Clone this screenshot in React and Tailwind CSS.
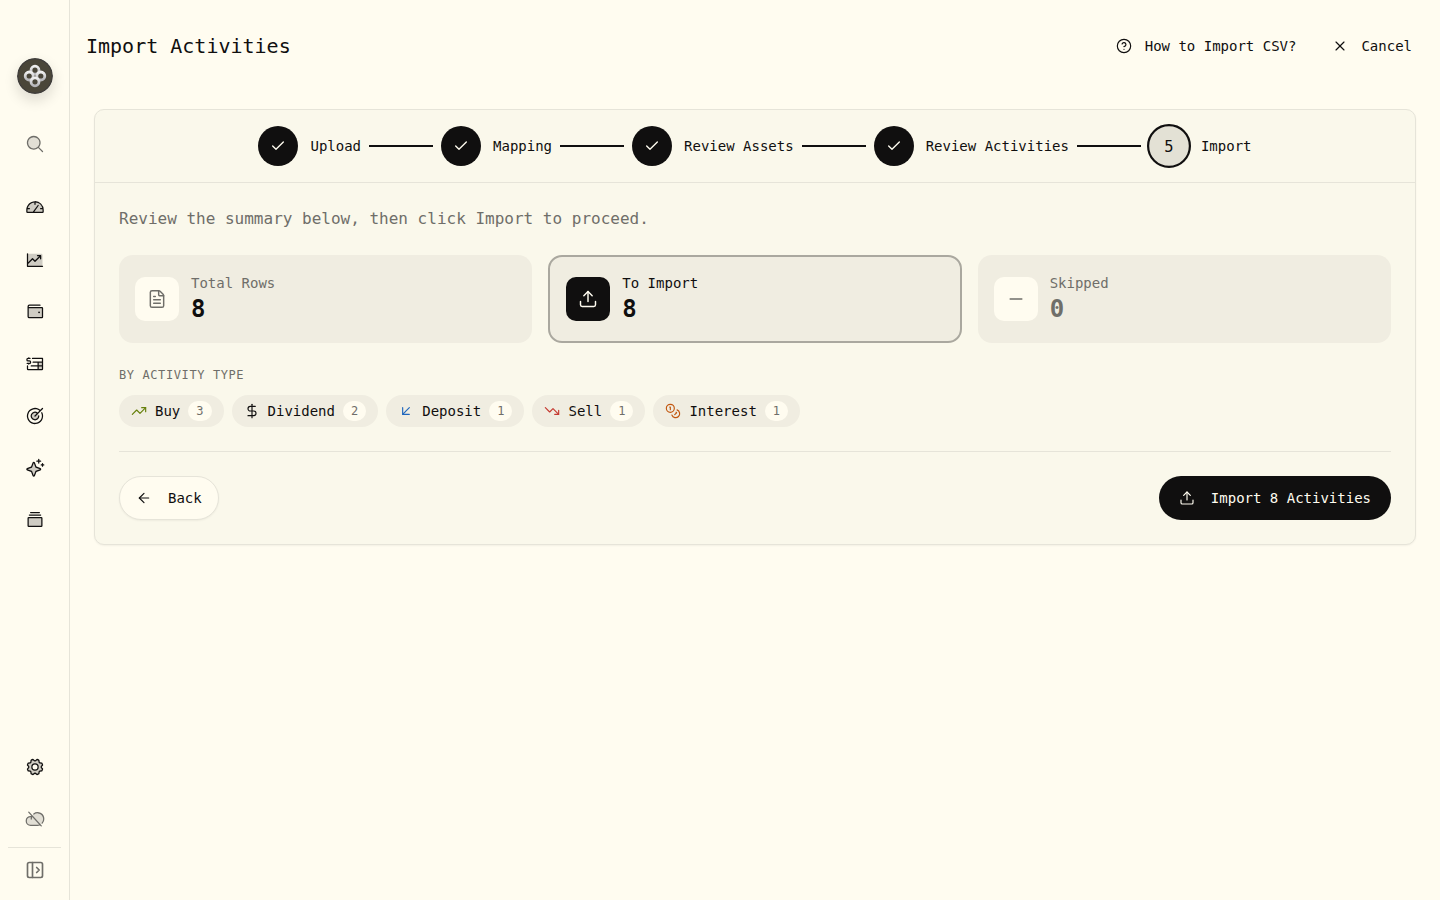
import React from 'react';
import {
  ArrowDownLeft,
  ArrowLeft,
  Check,
  CircleQuestionMark,
  Coins,
  DollarSign,
  FileText,
  Minus,
  PanelLeftOpen,
  TrendingDown,
  TrendingUp,
  Upload,
  X,
} from 'lucide-react';
import {
  PiCardsThreeDuotone,
  PiChartLineUpDuotone,
  PiCloudSlashDuotone,
  PiGaugeDuotone,
  PiGearDuotone,
  PiInvoiceDuotone,
  PiMagnifyingGlassDuotone,
  PiSparkleDuotone,
  PiTargetDuotone,
  PiWalletDuotone,
} from 'react-icons/pi';

const navItems = [
  { label: 'Dashboard', icon: PiGaugeDuotone },
  { label: 'Insights', icon: PiChartLineUpDuotone },
  { label: 'Holdings', icon: PiWalletDuotone },
  { label: 'Activities', icon: PiInvoiceDuotone },
  { label: 'Goals', icon: PiTargetDuotone },
  { label: 'Assistant', icon: PiSparkleDuotone },
  { label: 'Addons', icon: PiCardsThreeDuotone },
];

const steps = ['Upload', 'Mapping', 'Review Assets', 'Review Activities', 'Import'];
const currentStep = 4;

const activityTypes = [
  { label: 'Buy', count: 3, icon: TrendingUp, color: 'text-[#66800b]' },
  { label: 'Dividend', count: 2, icon: DollarSign, color: 'text-[#100f0f]' },
  { label: 'Deposit', count: 1, icon: ArrowDownLeft, color: 'text-[#1f66bd]' },
  { label: 'Sell', count: 1, icon: TrendingDown, color: 'text-[#c53a31]' },
  { label: 'Interest', count: 1, icon: Coins, color: 'text-[#c2570f]' },
];

function Logo() {
  return (
    <svg viewBox="0 0 36 36" className="size-9 rounded-full shadow-[0_6px_14px_rgba(16,15,15,0.14)]" aria-hidden="true">
      <defs>
        <linearGradient id="petals" x1="0" y1="0" x2="0" y2="1">
          <stop offset="0" stopColor="#f0f0f0" />
          <stop offset="1" stopColor="#b4b4b8" />
        </linearGradient>
      </defs>
      <circle cx="18" cy="18" r="18" fill="#403e3c" />
      <circle cx="18" cy="18" r="16.5" fill="#4a4639" />
      <g fill="none" stroke="url(#petals)" strokeWidth="2.8">
        <circle cx="18" cy="12.2" r="4" />
        <circle cx="12.2" cy="18" r="4" />
        <circle cx="23.8" cy="18" r="4" />
        <circle cx="18" cy="23.8" r="4" />
      </g>
    </svg>
  );
}

function NavLink({ label, icon: Icon, muted }) {
  return (
    <a
      href="#"
      aria-label={label}
      className={`flex size-10 items-center justify-center ${muted ? 'text-[#6f6e69]' : 'text-[#100f0f]'}`}
    >
      <Icon className="size-5" />
    </a>
  );
}

function Sidebar() {
  return (
    <aside className="flex w-[70px] shrink-0 flex-col border-r border-[#e6e4d9]">
      <div className="flex flex-col items-center pt-[58px]">
        <a href="#" aria-label="Home">
          <Logo />
        </a>
      </div>
      <nav className="flex flex-1 flex-col items-center pt-[30px]">
        <button type="button" aria-label="Search" className="flex size-10 items-center justify-center text-[#6f6e69]">
          <PiMagnifyingGlassDuotone className="size-5" />
        </button>
        <div className="flex flex-col gap-3 pt-6">
          {navItems.map((item) => (
            <NavLink key={item.label} {...item} />
          ))}
        </div>
      </nav>
      <div className="flex flex-col items-center gap-3 pb-2">
        <NavLink label="Settings" icon={PiGearDuotone} />
        <NavLink label="Sync disabled" icon={PiCloudSlashDuotone} muted />
      </div>
      <div className="mx-2 flex justify-center border-t border-[#e6e4d9] pt-0.5 pb-2.5">
        <button type="button" aria-label="Expand sidebar" className="flex size-10 items-center justify-center text-[#6f6e69]">
          <PanelLeftOpen className="size-5" />
        </button>
      </div>
    </aside>
  );
}

function Stepper() {
  return (
    <ol className="flex items-center justify-center border-b border-[#e6e4d9] px-6 py-4">
      {steps.map((step, i) => (
        <li key={step} className="flex items-center">
          {i < currentStep ? (
            <span className="flex size-10 items-center justify-center rounded-full bg-[#100f0f] text-[#fffcf0]">
              <Check className="size-4" />
            </span>
          ) : (
            <span className="flex size-10 scale-110 items-center justify-center rounded-full border-2 border-[#100f0f] bg-[#e3e1d5] text-sm font-medium">
              {i + 1}
            </span>
          )}
          <span className="ml-3 text-sm font-medium">{step}</span>
          {i < steps.length - 1 && <span className="mx-2 h-0.5 w-16 bg-[#100f0f]"></span>}
        </li>
      ))}
    </ol>
  );
}

function StatCard({ label, value, icon: Icon, variant = 'default' }) {
  const active = variant === 'active';
  const empty = variant === 'empty';

  return (
    <div className={`flex items-center gap-3 rounded-[14px] bg-[#f0ede1] p-4 ${active ? 'border-2 border-[#aaa89f]' : ''}`}>
      <div
        className={`flex size-11 items-center justify-center rounded-[10px] ${
          active ? 'bg-[#100f0f] text-[#fffcf0]' : 'bg-[#fffcf0] text-[#6f6e69]'
        }`}
      >
        <Icon className="size-5" strokeWidth={1.75} />
      </div>
      <div>
        <p className={`text-sm ${active ? '' : 'text-[#6f6e69]'}`}>{label}</p>
        <p className={`text-2xl font-bold ${empty ? 'text-[#6f6e69]' : ''}`}>{value}</p>
      </div>
    </div>
  );
}

function ActivityChip({ label, count, icon: Icon, color }) {
  return (
    <li className="flex h-8 items-center gap-2 rounded-full bg-[#f0ede1] px-3">
      <Icon className={`size-4 ${color}`} strokeWidth={1.75} />
      <span className="text-sm">{label}</span>
      <span className="flex h-5 items-center rounded-full bg-[#fffcf0] px-2 text-xs text-[#6f6e69]">{count}</span>
    </li>
  );
}

export default function App() {
  return (
    <div className="flex min-h-screen bg-[#fffcf0] font-['DejaVu_Sans_Mono',monospace] text-[#100f0f]">
      <Sidebar />

      <main className="flex-1">
        <header className="flex h-23 items-center justify-between pr-7 pl-4">
          <h1 className="text-xl font-medium">Import Activities</h1>
          <div className="flex items-center gap-9 text-sm">
            <button type="button" className="flex items-center gap-[13px]">
              <CircleQuestionMark className="size-4" strokeWidth={1.75} />
              How to Import CSV?
            </button>
            <button type="button" className="flex items-center gap-[13px] font-medium">
              <X className="size-4" strokeWidth={1.75} />
              Cancel
            </button>
          </div>
        </header>

        <div className="px-6 pt-[17px]">
          <section className="rounded-[10px] border border-[#e6e4d9] bg-[#faf8eb] shadow-xs">
            <Stepper />

            <div className="p-6">
              <p className="text-base text-[#6f6e69]">Review the summary below, then click Import to proceed.</p>

              {/* Summary */}
              <div className="mt-6 grid grid-cols-3 gap-4">
                <StatCard label="Total Rows" value={8} icon={FileText} />
                <StatCard label="To Import" value={8} icon={Upload} variant="active" />
                <StatCard label="Skipped" value={0} icon={Minus} variant="empty" />
              </div>

              <h2 className="mt-6 text-xs tracking-wider text-[#6f6e69] uppercase">By Activity Type</h2>
              <ul className="mt-3 flex flex-wrap gap-2">
                {activityTypes.map((type) => (
                  <ActivityChip key={type.label} {...type} />
                ))}
              </ul>

              {/* Footer actions */}
              <div className="mt-6 flex justify-between border-t border-[#e6e4d9] pt-6">
                <button
                  type="button"
                  className="flex h-11 items-center gap-4 rounded-full border border-[#e6e4d9] bg-[#fffcf0] px-4 text-sm font-medium shadow-xs"
                >
                  <ArrowLeft className="size-4" strokeWidth={1.75} />
                  Back
                </button>
                <button
                  type="button"
                  className="flex h-11 items-center gap-4 rounded-full bg-[#100f0f] px-5 text-sm font-medium text-[#fffcf0]"
                >
                  <Upload className="size-4" strokeWidth={1.75} />
                  Import 8 Activities
                </button>
              </div>
            </div>
          </section>
        </div>
      </main>
    </div>
  );
}
